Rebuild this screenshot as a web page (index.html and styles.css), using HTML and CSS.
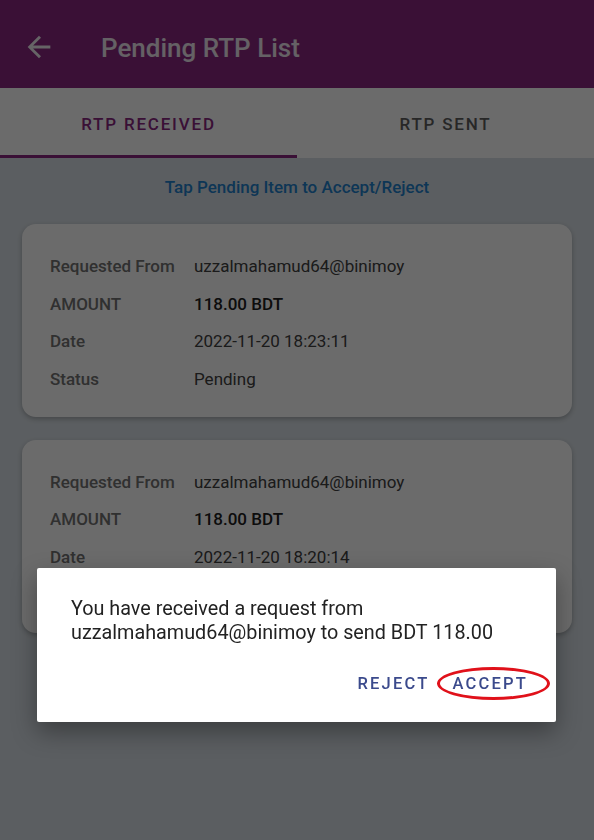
FILE: index.html
```html
<!DOCTYPE html>
<html lang="en">
<head>
    <meta charset="UTF-8">
    <title>Pending RTP List</title>
    <link rel="stylesheet" href="styles.css">
</head>
<body>
    <!-- 상단 앱바 -->
    <div class="appbar">
        <svg class="back" viewBox="0 0 24 24" width="34" height="34">
            <path d="M20 11H7.83l5.59-5.59L12 4l-8 8 8 8 1.41-1.41L7.83 13H20v-2z" fill="currentColor"/>
        </svg>
        <div class="title">Pending RTP List</div>
    </div>

    <!-- 탭 -->
    <div class="tabs">
        <div class="tab active">RTP RECEIVED</div>
        <div class="tab">RTP SENT</div>
    </div>

    <div class="content">
        <div class="hint">Tap Pending Item to Accept/Reject</div>

        <div class="card">
            <div class="row"><span class="label">Requested From</span><span class="value">uzzalmahamud64@binimoy</span></div>
            <div class="row"><span class="label">AMOUNT</span><span class="value amount">118.00 BDT</span></div>
            <div class="row"><span class="label">Date</span><span class="value">2022-11-20 18:23:11</span></div>
            <div class="row"><span class="label">Status</span><span class="value">Pending</span></div>
        </div>

        <div class="card">
            <div class="row"><span class="label">Requested From</span><span class="value">uzzalmahamud64@binimoy</span></div>
            <div class="row"><span class="label">AMOUNT</span><span class="value amount">118.00 BDT</span></div>
            <div class="row"><span class="label">Date</span><span class="value">2022-11-20 18:20:14</span></div>
            <div class="row"><span class="label">Status</span><span class="value">Pending</span></div>
        </div>
    </div>

    <!-- 다이얼로그 -->
    <div class="dim"></div>
    <div class="dialog">
        <p class="message">You have received a request from uzzalmahamud64@binimoy to send BDT 118.00</p>
        <div class="actions">
            <span class="action">REJECT</span>
            <span class="action accept">ACCEPT</span>
        </div>
    </div>
</body>
</html>
```

FILE: styles.css
```css
body {
    margin: 0;
    font-family: Roboto, "Noto Sans", Arial, sans-serif;
    background-color: #d9e0e6;
    height: 840px;
    overflow: hidden;
}

.appbar {
    height: 88px;
    background-color: #8a2882;
    display: flex;
    align-items: center;
    padding-left: 22px;
    box-sizing: border-box;
}

.back {
    color: #f2eef2;
    margin-right: 45px;
    margin-top: 5px;
}

.title {
    color: #f0e8f0;
    font-size: 26px;
    font-weight: 500;
    margin-top: 7px;
}

.tabs {
    display: flex;
    height: 70px;
    background-color: #ffffff;
}

.tab {
    flex: 1;
    display: flex;
    align-items: center;
    justify-content: center;
    font-size: 17px;
    font-weight: 500;
    letter-spacing: 1.8px;
    color: #5e5e5e;
    padding-top: 2px;
    box-sizing: border-box;
}

.tab.active {
    color: #8a2882;
    border-bottom: 3px solid #8a2882;
    padding-top: 5px;
}

.content {
    padding: 0 22px;
}

.hint {
    text-align: center;
    color: #1f80cc;
    font-size: 17px;
    font-weight: 500;
    padding-top: 19px;
    height: 47px;
}

.card {
    background-color: #ffffff;
    border-radius: 14px;
    padding: 23px 28px 19px;
    margin-bottom: 23px;
    box-shadow: 0 2px 5px rgba(0, 0, 0, 0.25);
}

.row {
    display: flex;
    align-items: center;
    height: 37.7px;
    font-size: 17px;
}

.label {
    width: 144px;
    color: #727272;
    font-weight: 500;
}

.value {
    color: #404040;
}

.value.amount {
    color: #202020;
    font-weight: 500;
}

.dim {
    position: fixed;
    inset: 0;
    background-color: rgba(0, 0, 0, 0.58);
}

.dialog {
    position: absolute;
    left: 37px;
    top: 568px;
    width: 519px;
    height: 154px;
    background-color: #ffffff;
    border-radius: 2px;
    padding: 29px 34px 0;
    box-sizing: border-box;
    box-shadow: 0 10px 24px rgba(0, 0, 0, 0.35);
}

.message {
    margin: 0;
    font-size: 19.8px;
    line-height: 24px;
    color: #222;
}

.actions {
    display: flex;
    justify-content: flex-end;
    gap: 23px;
    margin-top: 29px;
    margin-right: -6px;
}

.action {
    font-size: 16.5px;
    font-weight: 500;
    letter-spacing: 2.2px;
    color: #3b4a8c;
}

/* 빨간 동그라미 표시 */
.accept {
    position: relative;
}

.accept::after {
    content: "";
    position: absolute;
    left: -16px;
    right: -22px;
    top: -7px;
    bottom: -7px;
    border: 3px solid #e0111a;
    border-radius: 50%;
}
```
